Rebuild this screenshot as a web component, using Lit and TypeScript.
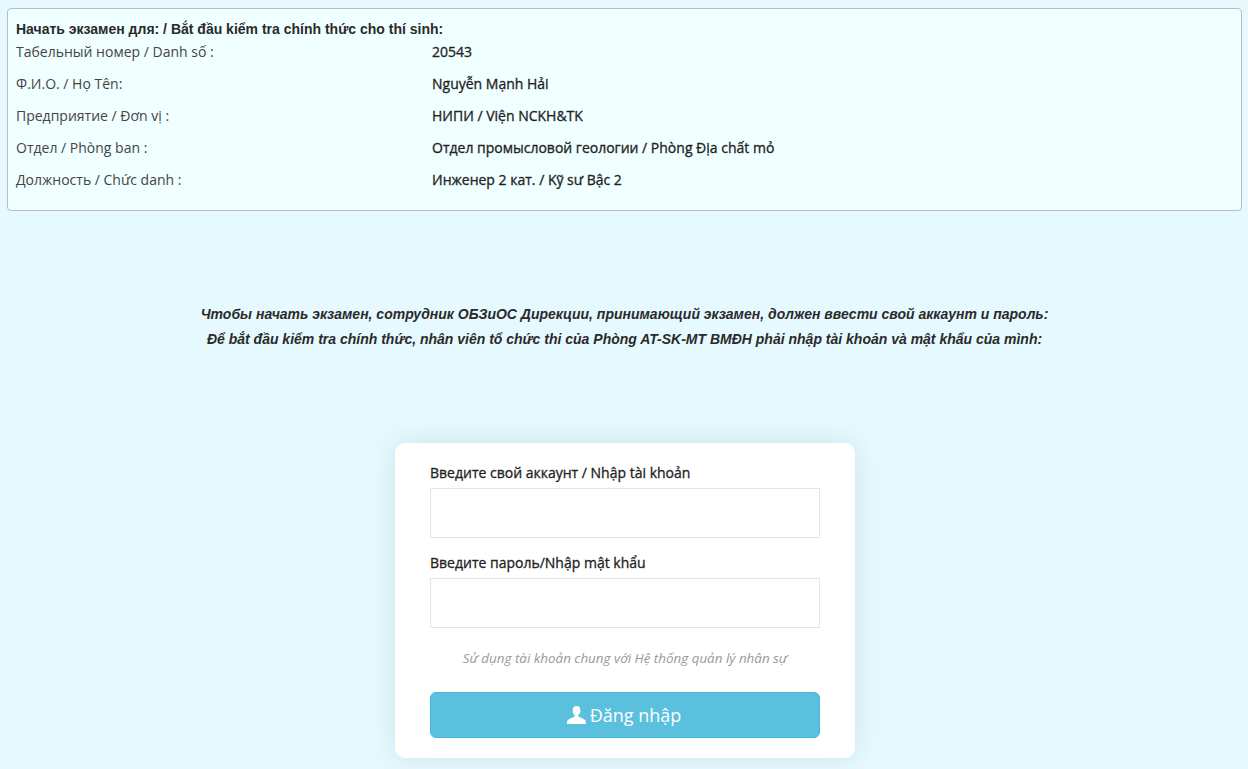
import { LitElement, html, css } from "lit";
import { customElement } from "lit/decorators.js";

const rows: [string, string][] = [
  ["Табельный номер / Danh số :", "20543"],
  ["Ф.И.О. / Họ Tên:", "Nguyễn Mạnh Hải"],
  ["Предприятие / Đơn vị :", "НИПИ / Viện NCKH&TK"],
  ["Отдел / Phòng ban :", "Отдел промысловой геологии / Phòng Địa chất mỏ"],
  ["Должность / Chức danh :", "Инженер 2 кат. / Kỹ sư Bậc 2"],
];

@customElement("app-root")
export class AppRoot extends LitElement {
  static styles = css`
    :host {
      display: block;
      height: 769px;
      overflow: hidden;
      background: #e6f9ff;
      font-family: "Open Sans", sans-serif;
      font-size: 14px;
      color: #333;
      box-sizing: border-box;
      padding: 8px 6px 0 7px;
    }
    .panel {
      border: 1px solid #bbb;
      border-radius: 4px;
      background: #f0ffff;
      padding: 11px 8px 14px;
      height: 203px;
      box-sizing: border-box;
    }
    .head {
      font-family: "Liberation Sans", sans-serif;
      font-weight: 700;
      font-size: 14px;
      line-height: 18px;
      color: #2a2a2a;
    }
    .row {
      display: grid;
      grid-template-columns: 416px 1fr;
      height: 32px;
      line-height: 32px;
    }
    .rows { margin-top: -2px; }
    .label { color: #444; }
    .value {
      font-weight: 500;
      color: #222;
      -webkit-text-stroke: 0.3px #222;
    }
    .notice {
      margin-top: 91px;
      font-family: "Liberation Sans", sans-serif;
      font-style: italic;
      font-weight: 700;
      font-size: 14px;
      line-height: 25px;
      text-align: center;
      color: #2a2a2a;
    }
    .notice p { margin: 0; }
    .card {
      width: 460px;
      height: 315px;
      box-sizing: border-box;
      margin: 91px 0 0 388px;
      padding: 20px 35px 0;
      background: #fff;
      border-radius: 10px;
      box-shadow: 0 0 24px rgba(0, 60, 90, 0.12);
    }
    label {
      display: block;
      font-weight: 500;
      line-height: 20px;
      color: #222;
      -webkit-text-stroke: 0.3px #222;
      margin-bottom: 5px;
    }
    input {
      display: block;
      width: 100%;
      height: 50px;
      box-sizing: border-box;
      border: 1px solid #e5e5e5;
      background: #fff;
      margin-bottom: 15px;
      outline: none;
    }
    .hint {
      margin-top: 21px;
      text-align: center;
      font-style: italic;
      font-size: 13.4px;
      line-height: 18px;
      color: #999;
    }
    button {
      display: flex;
      align-items: center;
      justify-content: center;
      gap: 4px;
      width: 100%;
      height: 46px;
      margin-top: 25px;
      border: 1px solid #46b8da;
      border-radius: 6px;
      background: #5bc0de;
      color: #fff;
      font-family: "Open Sans", sans-serif;
      font-size: 18px;
      padding: 0 2px 0 0;
    }
    svg { display: block; fill: #fff; }
  `;

  render() {
    return html`
      <section class="panel">
        <div class="head">Начать экзамен для: / Bắt đầu kiểm tra chính thức cho thí sinh:</div>
        <div class="rows">
          ${rows.map(
            ([l, v]) => html`<div class="row"><span class="label">${l}</span><span class="value">${v}</span></div>`
          )}
        </div>
      </section>
      <div class="notice">
        <p>Чтобы начать экзамен, сотрудник ОБЗиОС Дирекции, принимающий экзамен, должен ввести свой аккаунт и пароль:</p>
        <p>Để bắt đầu kiểm tra chính thức, nhân viên tổ chức thi của Phòng AT-SK-MT BMĐH phải nhập tài khoản và mật khẩu của mình:</p>
      </div>
      <form class="card">
        <label>Введите свой аккаунт / Nhập tài khoản</label>
        <input type="text" />
        <label>Введите пароль/Nhập mật khẩu</label>
        <input type="password" />
        <div class="hint">Sử dụng tài khoản chung với Hệ thống quản lý nhân sự</div>
        <button type="button">
          <svg width="19" height="18" viewBox="0 0 19 18" aria-hidden="true">
            <path d="M9.5 0C6.9 0 5.6 1.9 5.6 4.4c0 1.9.8 3.6 1.9 4.7.3.4.3 1.3-.2 1.7C5.500 12 .8 12.800.2 15.500 0 16.500 0 18 0 18h19s0-1.500-.2-2.500c-.6-2.700-5.300-3.500-7.100-4.700-.5-.4-.5-1.300-.2-1.700 1.100-1.100 1.900-2.800 1.900-4.700C13.400 1.900 12.100 0 9.500 0z"/>
          </svg>
          <span>Đăng nhập</span>
        </button>
      </form>
    `;
  }
}
